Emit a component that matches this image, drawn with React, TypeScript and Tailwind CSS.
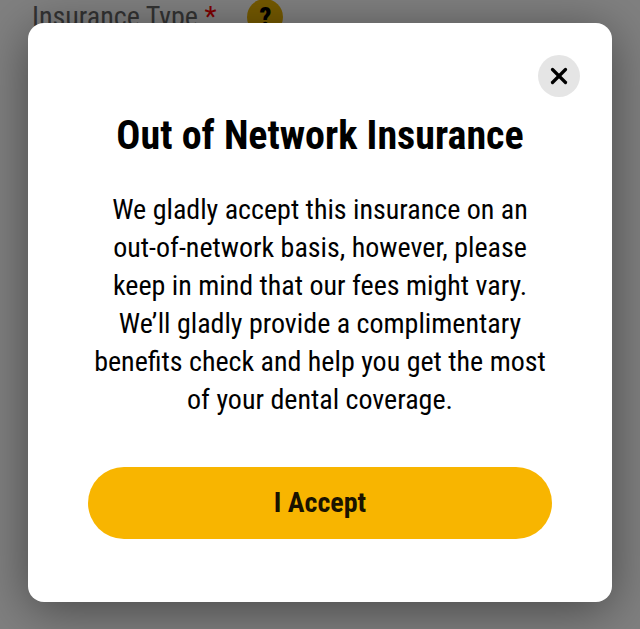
import { X } from "lucide-react";

const bodyLines = [
  "We gladly accept this insurance on an",
  "out-of-network basis, however, please",
  "keep in mind that our fees might vary.",
  "We’ll gladly provide a complimentary",
  "benefits check and help you get the most",
  "of your dental coverage.",
];

export default function App() {
  return (
    <div className="relative h-[629px] w-[640px] overflow-hidden bg-[#808080] font-['Roboto',sans-serif] [font-stretch:75%]">
      {/* form behind the dimmed backdrop */}
      <div className="flex items-center pl-[32px] -mt-[2px]">
        <span className="text-[28px] leading-[38px] text-[#333333]">
          Insurance Type <span className="text-[#7f0000]">*</span>
        </span>
        <span className="ml-[31px] flex h-9 w-9 items-center justify-center rounded-full bg-[#755a00] text-[26px] font-black text-black">
          ?
        </span>
      </div>

      <div className="absolute left-[28px] top-[23px] flex h-[579px] w-[584px] flex-col items-center rounded-[16px] bg-white px-[60px] pt-[91px] shadow-[0_8px_50px_rgba(0,0,0,0.45)]">
        <button className="absolute right-[32px] top-[32px] flex h-[42px] w-[42px] items-center justify-center rounded-full bg-[#e5e5e5] text-black">
          <X size={26} strokeWidth={3} />
        </button>
        <h1 className="whitespace-nowrap text-[40px] font-bold leading-[44px] text-black">
          Out of Network Insurance
        </h1>
        <p className="mt-[33px] text-center text-[28px] leading-[38px] text-black">
          {bodyLines.map((line) => (
            <span key={line} className="block whitespace-nowrap">
              {line}
            </span>
          ))}
        </p>
        <button className="mt-[48px] h-[72px] w-[464px] shrink-0 rounded-full bg-[#f8b500] text-[28px] font-bold text-[#1a1300]">
          I Accept
        </button>
      </div>
    </div>
  );
}
